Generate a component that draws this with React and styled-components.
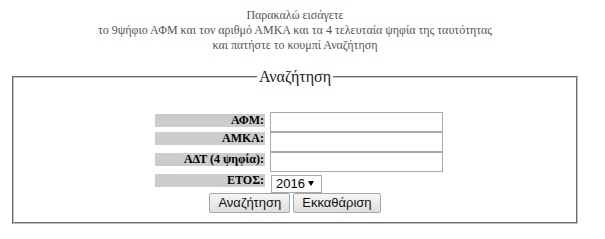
import React from 'react'
import styled, { createGlobalStyle } from 'styled-components'

const GlobalStyle = createGlobalStyle`
  body {
    margin: 8px;
    background: #fff;
    font-family: "Liberation Serif", "Times New Roman", serif;
  }
`

const Page = styled.div`
  width: 574px;
`

const Intro = styled.div`
  text-align: center;
  font-family: "Liberation Serif", "Times New Roman", serif;
  font-size: 12px;
  line-height: 15px;
  color: #555;
`

const Fieldset = styled.fieldset`
  margin: 15px 4px 0;
  padding: 26px 0 9px;
  border: 2px groove rgb(192, 192, 192);
  min-width: 0;
`

const Legend = styled.legend`
  margin: 0 auto;
  padding: 0 2px;
  font-family: "Liberation Serif", "Times New Roman", serif;
  font-size: 16px;
  line-height: 18px;
  color: #222;
`

const FormGrid = styled.div`
  display: grid;
  grid-template-columns: 110px 173px;
  column-gap: 5px;
  margin-left: 141px;
`

const Label = styled.div`
  align-self: start;
  margin-top: ${(p) => p.$offset || 0}px;
  height: 13px;
  line-height: 13px;
  padding-right: 1px;
  background: #ccc;
  text-align: right;
  font-family: "Liberation Serif", "Times New Roman", serif;
  font-size: 12px;
  font-weight: bold;
  color: #000;
`

const TextInput = styled.input`
  box-sizing: border-box;
  width: 173px;
  height: 20px;
  margin: 0;
  padding: 1px 2px;
  border: 1px solid #a9a9a9;
  font-family: "Liberation Sans", Arial, sans-serif;
  font-size: 13px;
`

const SelectWrap = styled.div`
  position: relative;
  width: 51px;
  height: 18px;
  margin: 2px 0 0 1px;
`

const Select = styled.select`
  appearance: none;
  box-sizing: border-box;
  width: 51px;
  height: 18px;
  margin: 0;
  padding: 0 0 0 4px;
  border: 1px solid #a9a9a9;
  border-radius: 0;
  background: #fff;
  color: #000;
  font-family: "Liberation Sans", Arial, sans-serif;
  font-size: 13px;
  line-height: 16px;
`

const Arrow = styled.svg`
  position: absolute;
  right: 8px;
  top: 7px;
  pointer-events: none;
`

const Buttons = styled.div`
  display: flex;
  justify-content: center;
  gap: 3px;
  margin-top: 1px;
`

const Button = styled.button`
  box-sizing: border-box;
  height: 20px;
  margin: 0;
  padding: 0 8px;
  border: 1px solid #a6a6a6;
  border-radius: 2px;
  background: linear-gradient(#f6f6f6, #dedede);
  color: #111;
  font-family: "Liberation Sans", Arial, sans-serif;
  font-size: 13px;
  line-height: 18px;
`

export default function App() {
  return (
    <Page>
      <GlobalStyle />
      <Intro>
        Παρακαλώ εισάγετε
        <br />
        το 9ψήφιο ΑΦΜ και τον αριθμό ΑΜΚΑ και τα 4 τελευταία ψηφία της ταυτότητας
        <br />
        και πατήστε το κουμπί Αναζήτηση
      </Intro>
      <Fieldset>
        <Legend>Αναζήτηση</Legend>
        <FormGrid>
          <Label $offset={2}>ΑΦΜ:</Label>
          <TextInput type="text" />
          <Label>ΑΜΚΑ:</Label>
          <TextInput type="text" />
          <Label $offset={1}>ΑΔΤ (4 ψηφία):</Label>
          <TextInput type="text" />
          <Label $offset={2}>ΕΤΟΣ:</Label>
          <SelectWrap>
            <Select defaultValue="2016">
              <option value="2016">2016</option>
              <option value="2015">2015</option>
              <option value="2014">2014</option>
            </Select>
            <Arrow width="6" height="5" viewBox="0 0 6 5">
              <path d="M0 0 H6 L3 5 Z" fill="#000" />
            </Arrow>
          </SelectWrap>
        </FormGrid>
        <Buttons>
          <Button type="button">Αναζήτηση</Button>
          <Button type="button">Εκκαθάριση</Button>
        </Buttons>
      </Fieldset>
    </Page>
  )
}
